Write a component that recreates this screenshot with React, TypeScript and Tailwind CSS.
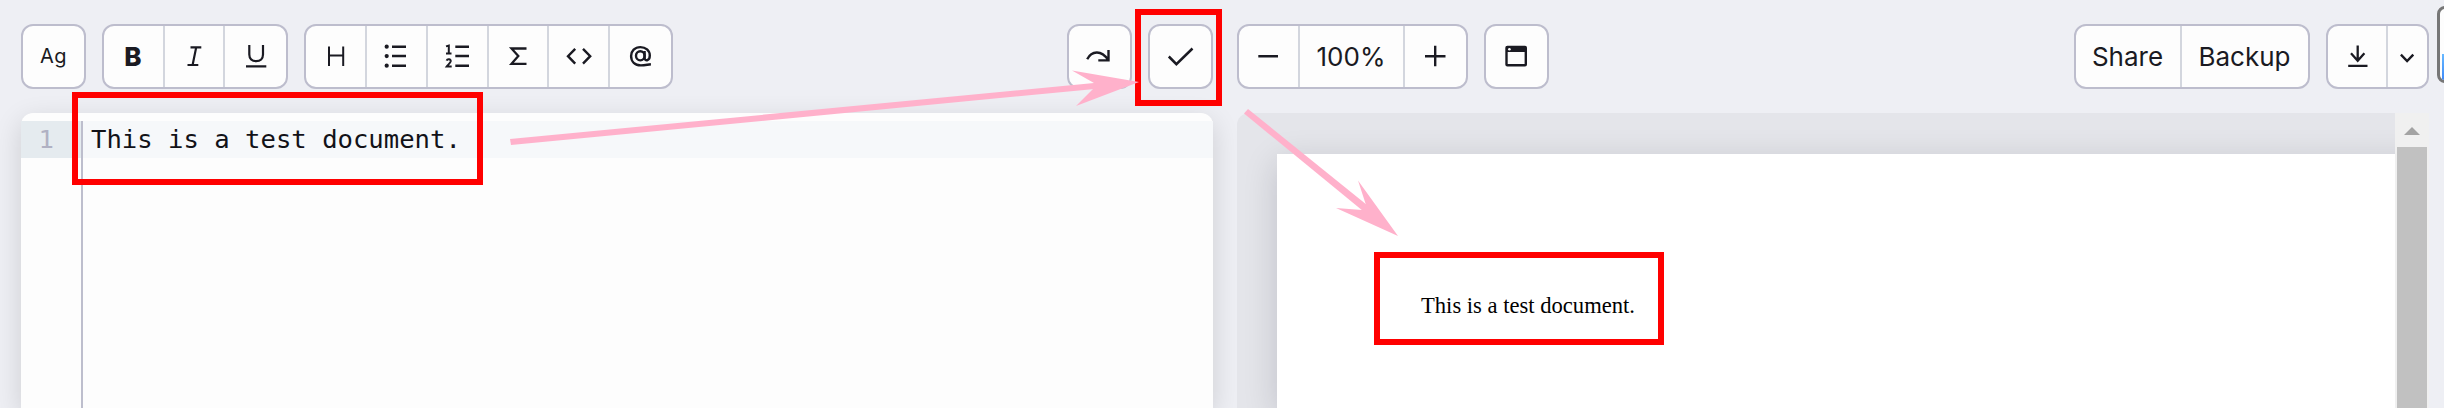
import type { ReactNode } from "react";

const ink = "#1a1a22";

function Group({ children, className = "" }: { children: ReactNode; className?: string }) {
  return (
    <div className={`flex h-[65px] shrink-0 overflow-hidden rounded-xl border-2 border-[#bdbdcd] bg-[#fdfdfd] ${className}`}>
      {children}
    </div>
  );
}

function Item({ children, className = "" }: { children: ReactNode; className?: string }) {
  return (
    <button className={`flex shrink-0 items-center justify-center border-[#d3d6de] ${className}`}>{children}</button>
  );
}

function Icon({ children, w = 2 }: { children: ReactNode; w?: number }) {
  return (
    <svg
      width="30"
      height="30"
      viewBox="0 0 30 30"
      fill="none"
      stroke={ink}
      strokeWidth={w}
      className="mr-px mb-px shrink-0 overflow-visible"
    >
      {children}
    </svg>
  );
}

export default function App() {
  return (
    <div className="relative flex h-[408px] w-[2444px] flex-col overflow-hidden bg-[#eeeff4] font-['Inter',sans-serif] text-[#1a1a22]">
      <header className="flex h-[113px] shrink-0 pt-6 pl-[21px]">
        <Group className="w-[65px]">
          <Item className="w-full pb-px text-xl tracking-[0.5px]">Ag</Item>
        </Group>
        <Group className="ml-4 w-[186px]">
          <Item className="w-[61px] border-r-2 pr-px text-[26px] font-extrabold">B</Item>
          <Item className="w-[60px] border-r-2">
            <Icon w={2.2}>
              <path d="M11.500 6.400h10.800M8.500 24h10.800M17.200 6.400L13.600 24" />
            </Icon>
          </Item>
          <Item className="grow">
            <Icon w={2.2}>
              <path d="M9.300 4v9.600c0 4 2.600 6.600 6.850 6.600S23 17.600 23 13.600V4M6 25.300h20.300" />
            </Icon>
          </Item>
        </Group>
        <Group className="ml-4 w-[369px]">
          <Item className="w-[61px] border-r-2">
            <Icon w={2}>
              <path d="M9 5.400V25M23.200 5.400V25M9 14.400h14.200" />
            </Icon>
          </Item>
          <Item className="w-[61px] border-r-2">
            <Icon w={2.5}>
              <path d="M11 5.700h14M11 15.100h14M11 24.700h14" />
              <g fill={ink} stroke="none">
                <circle cx="5.700" cy="5.700" r="2.100" />
                <circle cx="5.700" cy="15.100" r="2.100" />
                <circle cx="5.700" cy="24.700" r="2.100" />
              </g>
            </Icon>
          </Item>
          <Item className="w-[61px] border-r-2">
            <Icon>
              <path d="M13.300 5.700h13.700M13.300 15.100h13.700M13.300 24.700h13.700" strokeWidth="2.500" />
              <path d="M4 5.400l2.800-.8v8M4 12.400h5.500" />
              <path d="M4.600 19.600c.8-2.200 4.500-1.800 4.100.8-.3 1.600-2.600 3.300-3.900 5h4.900" />
            </Icon>
          </Item>
          <Item className="w-[60px] border-r-2">
            <Icon w={2.3}>
              <path d="M23.500 7.500H8.500L15.300 15l-6.800 7.800h15" />
            </Icon>
          </Item>
          <Item className="w-[61px] border-r-2">
            <Icon w={2.4}>
              <path d="M12.200 7.800 5 15.200l7.200 7.500M20 7.800l7.200 7.400-7.200 7.500" />
            </Icon>
          </Item>
          <Item className="grow">
            <Icon w={2.4}>
              <ellipse cx="15.300" cy="14.800" rx="4.300" ry="4.600" />
              <path d="M19.600 9.900v6.900c0 3.800 5.200 3.400 5.200-2.200 0-5.200-4.200-8.500-9.400-8.500-5.600 0-9.300 3.800-9.300 9 0 5.700 3.900 9.300 9.800 9.300 4 0 6.300-.8 10-1.200" />
            </Icon>
          </Item>
        </Group>
        <Group className="ml-[394px] w-[65px]">
          <Item className="w-full">
            <Icon w={2.4}>
              <path d="M3.200 18.200C7.500 9.600 17.500 8.600 24 18.800M24.500 9V19.400H14.300" />
            </Icon>
          </Item>
        </Group>
        <Group className="ml-4 w-[65px]">
          <Item className="w-full">
            <Icon w={2.5}>
              <path d="M3.800 15.500l7.600 7.700L27.500 7.500" />
            </Icon>
          </Item>
        </Group>
        <Group className="ml-6 w-[231px]">
          <Item className="w-[61px] border-r-2">
            <Icon w={2.4}>
              <path d="M5.300 15.200H25" />
            </Icon>
          </Item>
          <Item className="w-[105px] border-r-2 pr-px text-[26px] font-normal">100%</Item>
          <Item className="grow">
            <Icon w={2.4}>
              <path d="M5 15.200h20.500M15.200 4.800v20.500" />
            </Icon>
          </Item>
        </Group>
        <Group className="ml-4 w-[65px]">
          <Item className="w-full">
            <Icon w={2.4}>
              <rect x="5.500" y="6" width="19.300" height="18.200" rx="0.800" />
              <path d="M5.500 8.300h19.300" strokeWidth="5.400" />
              <circle cx="8.400" cy="8.300" r="1.300" fill="#fdfdfd" stroke="none" />
            </Icon>
          </Item>
        </Group>
        <Group className="ml-[525px] w-[236px]">
          <Item className="w-[106px] border-r-2 pr-px text-[26px] font-normal">Share</Item>
          <Item className="grow pr-px text-[26px] font-normal">Backup</Item>
        </Group>
        <Group className="ml-4 w-[103px]">
          <Item className="w-[60px] border-r-2">
            <Icon w={2.3}>
              <path d="M15.700 4.400v15.300M9 12.200l6.700 7.600 6.700-7.600M6.200 24.800h19.300" />
            </Icon>
          </Item>
          <Item className="grow">
            <Icon w={2.4}>
              <path d="M8.900 13.700l6.200 6.300 6.200-6.300" />
            </Icon>
          </Item>
        </Group>
      </header>

      <main className="flex h-[295px] shrink-0 pl-[21px]">
        <section className="flex w-[1192px] shrink-0 flex-col rounded-t-xl bg-[#fdfdfd] pt-2 shadow-[0_8px_28px_rgba(0,0,0,0.14)]">
          <div className="flex h-[37px] shrink-0 items-center bg-[#f6f8fa] font-['DejaVu_Sans_Mono',monospace] text-[25.6px] text-[#121218]">
            <div className="flex h-full w-[60px] items-center justify-end bg-[#e5ebef] pr-[27px] text-[#b0b1c3]">1</div>
            <div className="h-full w-0.5 bg-[#bdbecd]" />
            <div className="pl-2 whitespace-pre">This is a test document.</div>
          </div>
          <div className="ml-[60px] w-0.5 grow bg-[#bdbecd]" />
        </section>
        <section className="ml-6 flex w-[1192px] shrink-0 overflow-hidden rounded-tl-xl bg-[#e4e5ea]">
          <div className="flex w-[1158px] overflow-hidden pt-[41px] pl-10">
            <div className="w-[1200px] shrink-0 bg-white pt-[135px] pl-[144px] font-['Liberation_Serif',serif] text-[22.6px] text-black shadow-[0_8px_32px_rgba(0,0,30,0.16)]">
              This is a test document.
            </div>
          </div>
          <div className="flex w-[34px] shrink-0 flex-col items-center bg-[#f0f0f0]">
            <div className="flex h-[34px] shrink-0 items-center justify-center">
              <svg width="16" height="8" viewBox="0 0 16 8" className="mt-0.5">
                <path d="M0 8 8 0l8 8z" fill="#a3a3a3" />
              </svg>
            </div>
            <div className="w-[30px] grow bg-[#c1c1c1]" />
          </div>
        </section>
      </main>

      <div className="absolute top-[6px] left-[2437px] h-[77px] w-10 overflow-hidden rounded-lg border-[3px] border-[#777] bg-[#fdfdfd]">
        <div className="mt-[45px] ml-0.5 h-[30px] bg-linear-to-b from-[#67b8ff] to-[#3a82f6]" />
      </div>
      <div className="absolute top-[92px] left-[72px] h-[93px] w-[411px] border-6 border-[#ff0000]" />
      <div className="absolute top-[9px] left-[1135px] h-[97px] w-[87px] border-6 border-[#ff0000]" />
      <div className="absolute top-[252px] left-[1374px] h-[93px] w-[290px] border-6 border-[#ff0000]" />
      <svg className="absolute inset-0" width="2444" height="408" viewBox="0 0 2444 408" fill="#ffb1cb">
        <path d="M510 139 1094 83l.5 6L511 145z" />
        <path d="M1072 70.500 1139 82l-63 24 18-18v-5z" />
        <path d="M1248 109 1367 205l-4 6L1244 113.500z" />
        <path d="M1358 180.500 1398 236l-62-28 26 2 4-5z" />
      </svg>
    </div>
  );
}
